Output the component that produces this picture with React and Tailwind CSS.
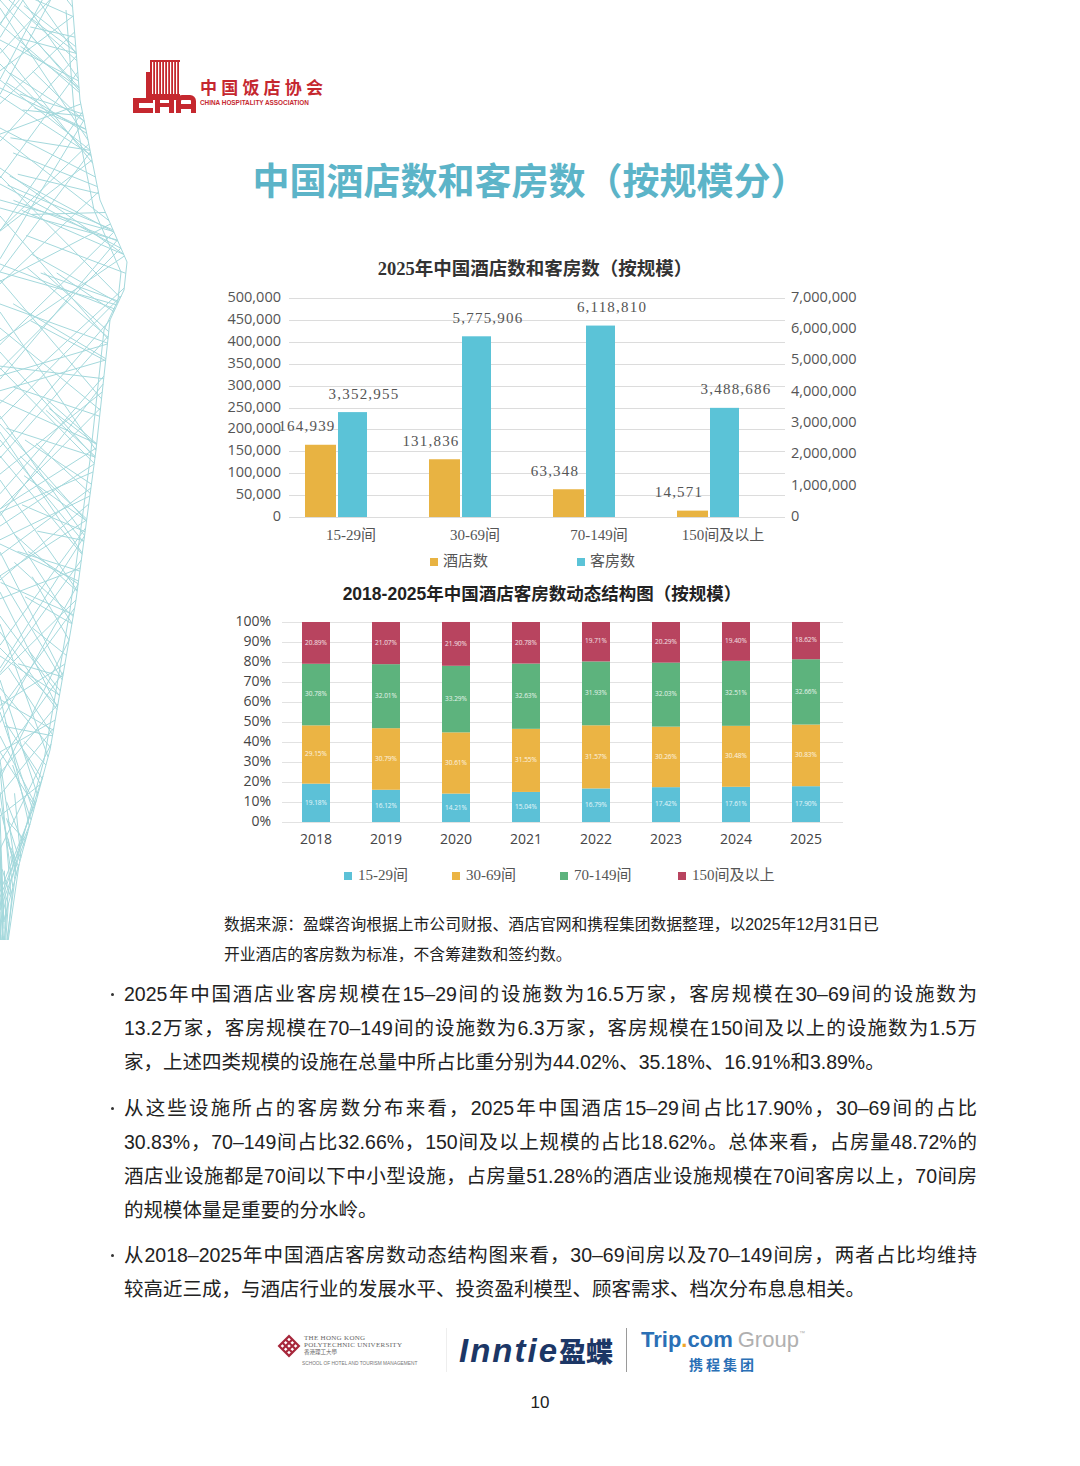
import React from "react";

const sansCJK = "font-['Liberation_Sans','Noto_Sans_CJK_SC',sans-serif]";
const serifCJK = "font-['Liberation_Serif','Noto_Sans_CJK_SC',serif]";
const axisFont = "font-['Open_Sans',sans-serif]";

// left wireframe decoration
const EDGE = [
  [0, 72], [100, 80], [200, 100], [262, 127], [290, 124], [320, 110],
  [450, 96], [600, 76], [750, 50], [920, 4],
];

function edgeX(y) {
  if (y <= 0) return 72;
  if (y >= 920) return 4;
  for (let i = 1; i < EDGE.length; i++) {
    const [y1, x1] = EDGE[i - 1];
    const [y2, x2] = EDGE[i];
    if (y <= y2) return x1 + ((y - y1) / (y2 - y1)) * (x2 - x1);
  }
  return 4;
}

function rng(seed) {
  let s = seed;
  return () => {
    s = (s * 16807) % 2147483647;
    return s / 2147483647;
  };
}

const WIRE = (() => {
  const r = rng(11);
  const out = [];
  for (let y = -120; y < 960; y += 8) {
    const d = 30 + r() * 110;
    const a = y;
    const b = y + d;
    if (r() < 0.5) out.push([0, b, edgeX(a), a]);
    else out.push([0, a, edgeX(b), b]);
    if (r() < 0.6) {
      const m = r() * 0.5;
      const y2 = a + d * 0.6 + (r() - 0.5) * 30;
      out.push([edgeX(a) * m, a + d * 0.2, edgeX(y2), y2]);
    }
  }
  return out;
})();

function Wireframe() {
  return (
    <svg
      width="140"
      height="940"
      viewBox="0 0 140 940"
      className="pointer-events-none absolute left-0 top-0"
    >
      <g stroke="#86ccd1" strokeWidth="1" fill="none" opacity="0.75">
        {WIRE.map(([x1, y1, x2, y2], i) => (
          <line key={i} x1={x1} y1={y1} x2={x2} y2={y2} />
        ))}
        <polyline points={EDGE.map(([y, x]) => `${x},${y}`).join(" ")} />
        <polyline points={EDGE.map(([y, x]) => `${x - 6},${y + 10}`).join(" ")} />
      </g>
    </svg>
  );
}

function AssocLogo() {
  const stripes = [];
  for (let x = 152; x < 180; x += 3) stripes.push(x);
  return (
    <div className="ml-[133px] flex items-end">
      <svg width="64" height="56" viewBox="133 58 64 56">
        <g fill="#c5282f">
          <rect x="150" y="60" width="30" height="40" />
          <rect x="146" y="72" width="6" height="28" />
          {/* C */}
          <path d="M133 98h20v5h-14v5h14v5h-20z" />
          {/* H */}
          <rect x="155" y="96" width="5" height="17" />
          <rect x="169" y="96" width="5" height="17" />
          <rect x="155" y="103" width="19" height="4" />
          {/* A */}
          <path d="M176 113v-12a6 6 0 0 1 6-6h8a6 6 0 0 1 6 6v12h-5v-4h-10v4zM181 104h10v-3a1 1 0 0 0-1-1h-8a1 1 0 0 0-1 1z" fillRule="evenodd" />
        </g>
        <g fill="#fff">
          {stripes.map((x) => (
            <rect key={x} x={x} y="62" width="1.2" height="32" />
          ))}
        </g>
      </svg>
      <div className="ml-[3px] mb-[7px] flex flex-col">
        <div className="font-['Noto_Sans_CJK_SC',serif] text-[17px] font-bold leading-[20px] tracking-[4.2px] text-[#c5282f]">
          中国饭店协会
        </div>
        <div className="mt-[2px] font-['Liberation_Sans',sans-serif] text-[6.4px] font-bold leading-[8px] text-[#c5282f]">
          CHINA HOSPITALITY ASSOCIATION
        </div>
      </div>
    </div>
  );
}

const HOTELS = [164939, 131836, 63348, 14571];
const ROOMS = [3352955, 5775906, 6118810, 3488686];
const CATS = ["15-29间", "30-69间", "70-149间", "150间及以上"];
const fmt = (n) => n.toLocaleString("en-US");

function Chart1() {
  const base = 517;
  const h = 219;
  return (
    <svg width="660" height="293" viewBox="215 282 660 293" className="ml-[215px] block">
      {Array.from({ length: 11 }, (_, i) => {
        const y = Math.round(base - (i * h) / 10) + 0.5;
        return (
          <g key={i}>
            <line x1="289" x2="785" y1={y} y2={y} stroke="#dcdcdc" strokeWidth="1" />
            <text x="281" y={y} textAnchor="end" dominantBaseline="middle" className={`${axisFont} fill-[#555] text-[14.5px]`}>
              {fmt(i * 50000)}
            </text>
          </g>
        );
      })}
      {Array.from({ length: 8 }, (_, i) => (
        <text key={i} x="791" y={base - (i * h) / 7} dominantBaseline="middle" className={`${axisFont} fill-[#555] text-[14.5px]`}>
          {fmt(i * 1000000)}
        </text>
      ))}
      {CATS.map((c, k) => {
        const s = 289 + 124 * k + 16;
        const oh = (HOTELS[k] / 500000) * h;
        const bh = (ROOMS[k] / 7000000) * h;
        return (
          <g key={c}>
            <rect x={s} y={base - oh} width="31" height={oh} fill="#e8b342" />
            <rect x={s + 33} y={base - bh} width="29" height={bh} fill="#5bc3d7" />
            <text x={s + 2} y={base - oh - 17} textAnchor="middle" dominantBaseline="middle" className={`${serifCJK} fill-[#555] text-[15px] tracking-[1.2px]`}>
              {fmt(HOTELS[k])}
            </text>
            <text x={s + 59} y={base - bh - 17} textAnchor="middle" dominantBaseline="middle" className={`${serifCJK} fill-[#555] text-[15px] tracking-[1.2px]`}>
              {fmt(ROOMS[k])}
            </text>
            <text x={289 + 124 * k + 62} y="537" textAnchor="middle" dominantBaseline="middle" className={`${serifCJK} fill-[#555] text-[15px]`}>
              {c}
            </text>
          </g>
        );
      })}
      <rect x="430" y="558" width="8" height="8" fill="#e8b342" />
      <text x="443" y="563" dominantBaseline="middle" className={`${serifCJK} fill-[#555] text-[15px]`}>酒店数</text>
      <rect x="577" y="558" width="8" height="8" fill="#5bc3d7" />
      <text x="590" y="563" dominantBaseline="middle" className={`${serifCJK} fill-[#555] text-[15px]`}>客房数</text>
    </svg>
  );
}

const YEARS = [
  ["2018", [19.18, 29.15, 30.78, 20.89]],
  ["2019", [16.12, 30.79, 32.01, 21.07]],
  ["2020", [14.21, 30.61, 33.29, 21.9]],
  ["2021", [15.04, 31.55, 32.63, 20.78]],
  ["2022", [16.79, 31.57, 31.93, 19.71]],
  ["2023", [17.42, 30.26, 32.03, 20.29]],
  ["2024", [17.61, 30.48, 32.51, 19.4]],
  ["2025", [17.9, 30.83, 32.66, 18.62]],
];
const SEG = ["#5cc1d7", "#ebb444", "#5db37d", "#b8445f"];
const SEG_NAMES = [
  ["15-29间", 344],
  ["30-69间", 452],
  ["70-149间", 560],
  ["150间及以上", 678],
];

function Chart2() {
  const base = 822;
  return (
    <svg width="660" height="286" viewBox="215 606 660 286" className="ml-[215px] block">
      {Array.from({ length: 11 }, (_, i) => {
        const y = base - i * 20 + 0.5;
        return (
          <g key={i}>
            <line x1="282" x2="843" y1={y} y2={y} stroke="#e2e2e2" strokeWidth="1" />
            <text x="271" y={y} textAnchor="end" dominantBaseline="middle" className={`${axisFont} fill-[#444] text-[14px]`}>
              {i * 10}%
            </text>
          </g>
        );
      })}
      {YEARS.map(([yr, vals], k) => {
        const x = 302 + 70 * k;
        let acc = 0;
        return (
          <g key={yr}>
            {vals.map((v, j) => {
              const y0 = base - acc * 2;
              acc += v;
              const y1 = base - acc * 2;
              return (
                <g key={j}>
                  <rect x={x} y={y1} width="28" height={y0 - y1} fill={SEG[j]} />
                  <text x={x + 14} y={(y0 + y1) / 2} textAnchor="middle" dominantBaseline="middle" className={`${axisFont} fill-white/85 text-[6.5px]`}>
                    {v.toFixed(2)}%
                  </text>
                </g>
              );
            })}
            <text x={x + 14} y="840" textAnchor="middle" dominantBaseline="middle" className={`${axisFont} fill-[#444] text-[14px]`}>
              {yr}
            </text>
          </g>
        );
      })}
      {SEG_NAMES.map(([n, x], j) => (
        <g key={n}>
          <rect x={x} y="872" width="8" height="8" fill={SEG[j]} />
          <text x={x + 14} y="877" dominantBaseline="middle" className={`${serifCJK} fill-[#555] text-[15px]`}>
            {n}
          </text>
        </g>
      ))}
    </svg>
  );
}

const PARAS = [
  [
    "2025年中国酒店业客房规模在15–29间的设施数为16.5万家，客房规模在30–69间的设施数为",
    "13.2万家，客房规模在70–149间的设施数为6.3万家，客房规模在150间及以上的设施数为1.5万",
    "家，上述四类规模的设施在总量中所占比重分别为44.02%、35.18%、16.91%和3.89%。",
  ],
  [
    "从这些设施所占的客房数分布来看，2025年中国酒店15–29间占比17.90%，30–69间的占比",
    "30.83%，70–149间占比32.66%，150间及以上规模的占比18.62%。总体来看，占房量48.72%的",
    "酒店业设施都是70间以下中小型设施，占房量51.28%的酒店业设施规模在70间客房以上，70间房",
    "的规模体量是重要的分水岭。",
  ],
  [
    "从2018–2025年中国酒店客房数动态结构图来看，30–69间房以及70–149间房，两者占比均维持",
    "较高近三成，与酒店行业的发展水平、投资盈利模型、顾客需求、档次分布息息相关。",
  ],
];

function Bullet({ lines, className }) {
  return (
    <div className={`ml-[111px] flex ${className}`}>
      <div className="w-[13px] pt-[16px]">
        <span className="block h-[3px] w-[3px] rounded-full bg-[#333]" />
      </div>
      <div className={`w-[853px] ${sansCJK} text-[19.5px] text-[#222]`}>
        {lines.map((l, i) => (
          <div
            key={i}
            className={
              i < lines.length - 1
                ? "h-[34px] whitespace-nowrap leading-[34px] text-justify [text-align-last:justify]"
                : "h-[34px] whitespace-nowrap leading-[34px]"
            }
          >
            {l}
          </div>
        ))}
      </div>
    </div>
  );
}

function PolyU() {
  return (
    <div className="flex w-[150px] flex-col">
      <div className="flex items-center">
        <svg width="24" height="24" viewBox="0 0 24 24">
          <g transform="rotate(45 12 12)" fill="none" stroke="#a7283c" strokeWidth="2.2">
            <rect x="5" y="5" width="14" height="14" />
            <path d="M9.7 5v14M14.3 5v14M5 9.7h14M5 14.3h14" />
          </g>
        </svg>
        <div className="ml-[3px] flex flex-col font-['Liberation_Serif','Noto_Sans_CJK_SC',serif] text-[#666]">
          <span className="text-[7px] leading-[7px] tracking-[0.3px]">THE HONG KONG</span>
          <span className="text-[7px] leading-[7px] tracking-[0.3px]">POLYTECHNIC UNIVERSITY</span>
          <span className="text-[5.5px] leading-[7px]">香港理工大學</span>
        </div>
      </div>
      <div className="ml-[25px] mt-[3px] font-['Liberation_Sans',sans-serif] text-[4.8px] leading-[6px] text-[#777]">
        SCHOOL OF HOTEL AND TOURISM MANAGEMENT
      </div>
    </div>
  );
}

export default function App() {
  return (
    <div className="relative h-[1466px] w-[1080px] overflow-hidden bg-white">
      <Wireframe />
      <div className="relative">
        <div className="h-[114px] pt-[58px]">
          <AssocLogo />
        </div>

        <h1 className={`mt-[47px] h-[44px] pr-[20px] text-center ${sansCJK} text-[37px] font-bold leading-[44px] text-[#5cb4c8]`}>
          中国酒店数和客房数（按规模分）
        </h1>

        <h2 className={`mt-[51px] h-[26px] pr-[10px] text-center ${serifCJK} text-[18.5px] font-bold leading-[26px] text-[#333]`}>
          2025年中国酒店数和客房数（按规模）
        </h2>
        <Chart1 />

        <h2 className={`mt-[7px] h-[24px] pl-[4px] text-center ${sansCJK} text-[17.5px] font-bold leading-[24px] text-[#222]`}>
          2018-2025年中国酒店客房数动态结构图（按规模）
        </h2>
        <Chart2 />

        <div className={`ml-[224px] mt-[18px] w-[648px] ${sansCJK} text-[15.8px] text-[#222]`}>
          <div className="h-[30px] whitespace-nowrap leading-[30px] text-justify [text-align-last:justify]">
            数据来源：盈蝶咨询根据上市公司财报、酒店官网和携程集团数据整理，以2025年12月31日已
          </div>
          <div className="h-[30px] whitespace-nowrap leading-[30px]">
            开业酒店的客房数为标准，不含筹建数和签约数。
          </div>
        </div>

        <Bullet lines={PARAS[0]} className="mt-[7px]" />
        <Bullet lines={PARAS[1]} className="mt-[12px]" />
        <Bullet lines={PARAS[2]} className="mt-[11px]" />

        <div className="ml-[277px] mt-[21px] flex h-[46px] items-center">
          <PolyU />
          <div className="ml-[19px] h-[44px] w-px bg-[#eeeeee]" />
          <div className="ml-[12px] flex items-center">
            <span className="font-['Liberation_Sans',sans-serif] text-[33px] font-bold italic leading-none tracking-[2px] text-[#1c3766]">
              Inntie
            </span>
            <span className="font-['Noto_Sans_CJK_SC',sans-serif] text-[27px] font-black leading-none text-[#1c3766]">
              盈蝶
            </span>
          </div>
          <div className="ml-[13px] h-[44px] w-px bg-[#9a9a9a]" />
          <div className="ml-[14px] flex flex-col items-center">
            <div className="flex items-start font-['Liberation_Sans',sans-serif] text-[22px] leading-[24px]">
              <span className="font-bold text-[#2a70b6]">Trip</span>
              <span className="font-bold text-[#f0a526]">.</span>
              <span className="font-bold text-[#2a70b6]">com</span>
              <span className="ml-[5px] text-[#b0b0b0]">Group</span>
              <span className="text-[6px] leading-[10px] text-[#b0b0b0]">™</span>
            </div>
            <div className="mt-[3px] font-['Noto_Sans_CJK_SC',sans-serif] text-[14px] font-bold leading-[18px] tracking-[3px] text-[#2a70b6]">
              携程集团
            </div>
          </div>
        </div>

        <div className="mt-[18px] h-[24px] text-center font-['Liberation_Sans',sans-serif] text-[17px] leading-[24px] text-[#222]">
          10
        </div>
      </div>
    </div>
  );
}
